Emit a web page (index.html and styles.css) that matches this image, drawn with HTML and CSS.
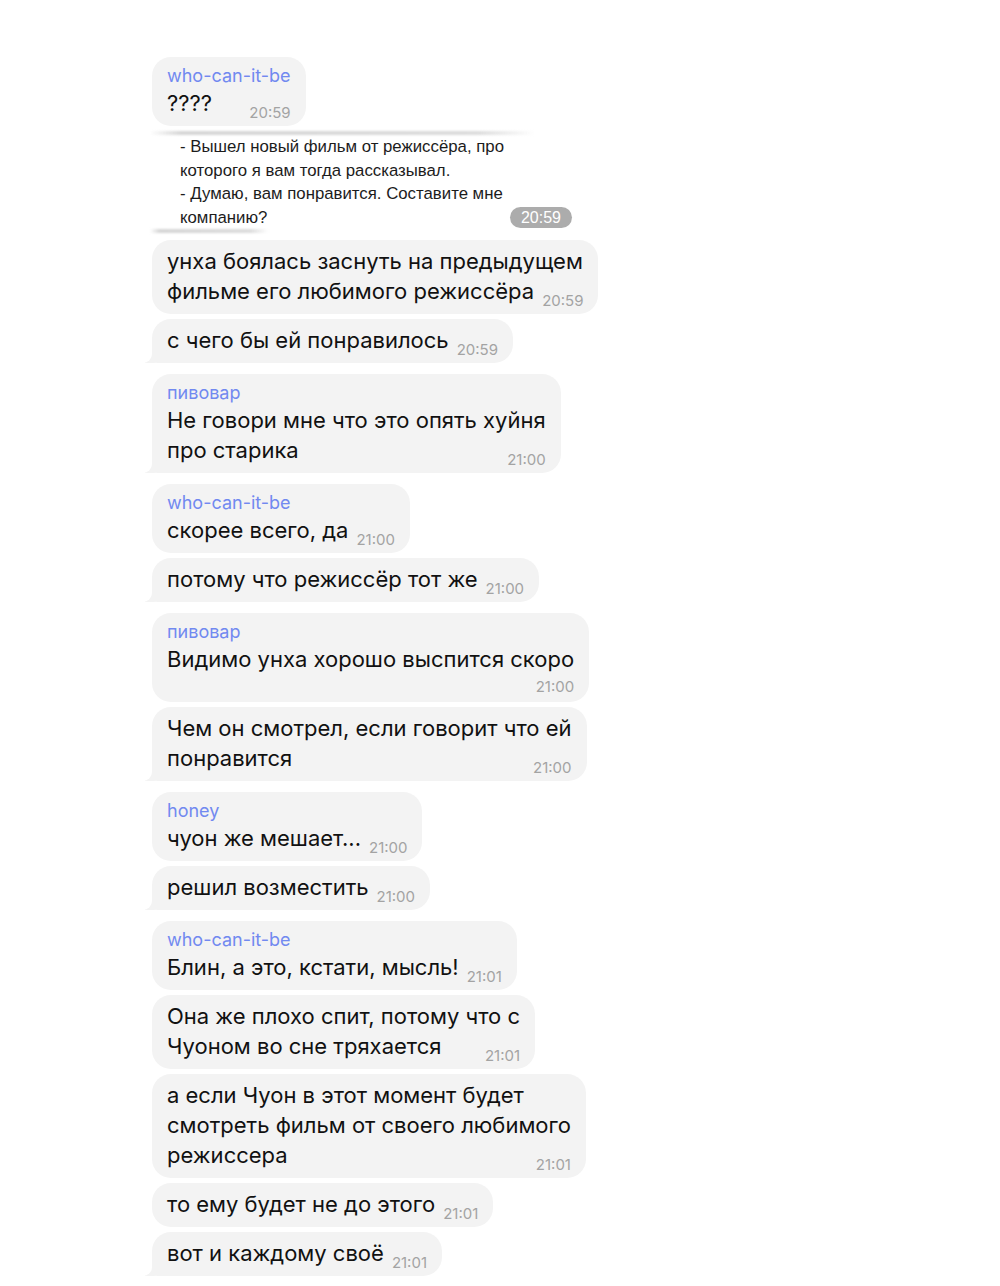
FILE: index.html
```html
<!DOCTYPE html>
<html lang="ru">
<head>
    <meta charset="UTF-8">
    <title>Чат</title>
    <link rel="stylesheet" href="styles.css">
</head>
<body>
<div class="chat">

    <div class="bubble">
        <div class="sender">who-can-it-be</div>
        <div class="row"><span>????</span><span class="time">20:59</span></div>
    </div>

    <!-- пересланный скриншот -->
    <div class="forward">
        <div class="edge"></div>
        <div class="forward-body">
            <div>- Вышел новый фильм от режиссёра, про</div>
            <div>которого я вам тогда рассказывал.</div>
            <div>- Думаю, вам понравится. Составите мне</div>
            <div class="row"><span>компанию?</span><span class="pill">20:59</span></div>
        </div>
        <div class="edge short"></div>
    </div>

    <div class="bubble">
        <div class="line">унха боялась заснуть на предыдущем</div>
        <div class="row"><span>фильме его любимого режиссёра</span><span class="time">20:59</span></div>
    </div>

    <div class="bubble tail">
        <div class="row"><span>с чего бы ей понравилось</span><span class="time">20:59</span></div>
    </div>

    <div class="bubble tail group-start">
        <div class="sender">пивовар</div>
        <div class="line">Не говори мне что это опять хуйня</div>
        <div class="row"><span>про старика</span><span class="time">21:00</span></div>
    </div>

    <div class="bubble group-start">
        <div class="sender">who-can-it-be</div>
        <div class="row"><span>скорее всего, да</span><span class="time">21:00</span></div>
    </div>

    <div class="bubble tail">
        <div class="row"><span>потому что режиссёр тот же</span><span class="time">21:00</span></div>
    </div>

    <div class="bubble group-start">
        <div class="sender">пивовар</div>
        <div class="line">Видимо унха хорошо выспится скоро</div>
        <div class="time-only"><span class="time">21:00</span></div>
    </div>

    <div class="bubble tail">
        <div class="line">Чем он смотрел, если говорит что ей</div>
        <div class="row"><span>понравится</span><span class="time">21:00</span></div>
    </div>

    <div class="bubble group-start">
        <div class="sender">honey</div>
        <div class="row"><span>чуон же мешает...</span><span class="time">21:00</span></div>
    </div>

    <div class="bubble tail">
        <div class="row"><span>решил возместить</span><span class="time">21:00</span></div>
    </div>

    <div class="bubble group-start">
        <div class="sender">who-can-it-be</div>
        <div class="row"><span>Блин, а это, кстати, мысль!</span><span class="time">21:01</span></div>
    </div>

    <div class="bubble">
        <div class="line">Она же плохо спит, потому что с</div>
        <div class="row"><span>Чуоном во сне тряхается</span><span class="time">21:01</span></div>
    </div>

    <div class="bubble">
        <div class="line">а если Чуон в этот момент будет</div>
        <div class="line">смотреть фильм от своего любимого</div>
        <div class="row"><span>режиссера</span><span class="time">21:01</span></div>
    </div>

    <div class="bubble">
        <div class="row"><span>то ему будет не до этого</span><span class="time">21:01</span></div>
    </div>

    <div class="bubble tail">
        <div class="row"><span>вот и каждому своё</span><span class="time">21:01</span></div>
    </div>

</div>
</body>
</html>
```

FILE: styles.css
```css
body {
    margin: 0;
    background: #fff;
    font-family: Inter, "Liberation Sans", sans-serif;
    color: #111;
}

.chat {
    display: flex;
    flex-direction: column;
    align-items: flex-start;
    gap: 5px;
    padding: 57px 0 0 152px;
}

.bubble {
    position: relative;
    background: #f3f3f3;
    border-radius: 19px;
    padding: 6px 15px 8px 15px;
    font-size: 22px;
    line-height: 30px;
}

.bubble.group-start {
    margin-top: 6px;
}

.bubble .sender {
    color: #7189f0;
    font-size: 18px;
    line-height: 25px;
}

.row {
    display: flex;
    justify-content: space-between;
    align-items: flex-end;
    gap: 8px;
}

.time {
    color: #a3a3a3;
    font-size: 15px;
    line-height: 15px;
    margin-bottom: -2px;
}

.time-only {
    text-align: right;
    line-height: 20px;
}

/* хвостик у последнего сообщения в группе */
.bubble.tail {
    border-bottom-left-radius: 6px;
}

.bubble.tail::before {
    content: "";
    position: absolute;
    left: -7px;
    bottom: 0;
    width: 22px;
    height: 18px;
    background: #f3f3f3;
    border-bottom-right-radius: 14px;
}

.bubble.tail::after {
    content: "";
    position: absolute;
    left: -10px;
    bottom: 0;
    width: 10px;
    height: 18px;
    background: #fff;
    border-bottom-right-radius: 9px;
}

/* пересланный скриншот */
.forward {
    width: 422px;
    margin-left: -2px;
    margin-bottom: 2px;
}

.forward .edge {
    width: 385px;
    height: 4px;
    background: linear-gradient(to right, rgba(200, 200, 200, 0), #d6d6d6 8%, #dcdcdc 85%, rgba(220, 220, 220, 0));
    filter: blur(1.2px);
}

.forward .edge.short {
    width: 118px;
}

.forward-body {
    padding-left: 30px;
    font-family: "Liberation Sans", Arial, sans-serif;
    font-size: 16.8px;
    line-height: 23.5px;
    color: #1c1c1c;
}

.forward-body .row {
    align-items: center;
}

.pill {
    background: #acacac;
    color: #fff;
    border-radius: 11px;
    padding: 0 11px;
    font-size: 16px;
    line-height: 21px;
}
```
